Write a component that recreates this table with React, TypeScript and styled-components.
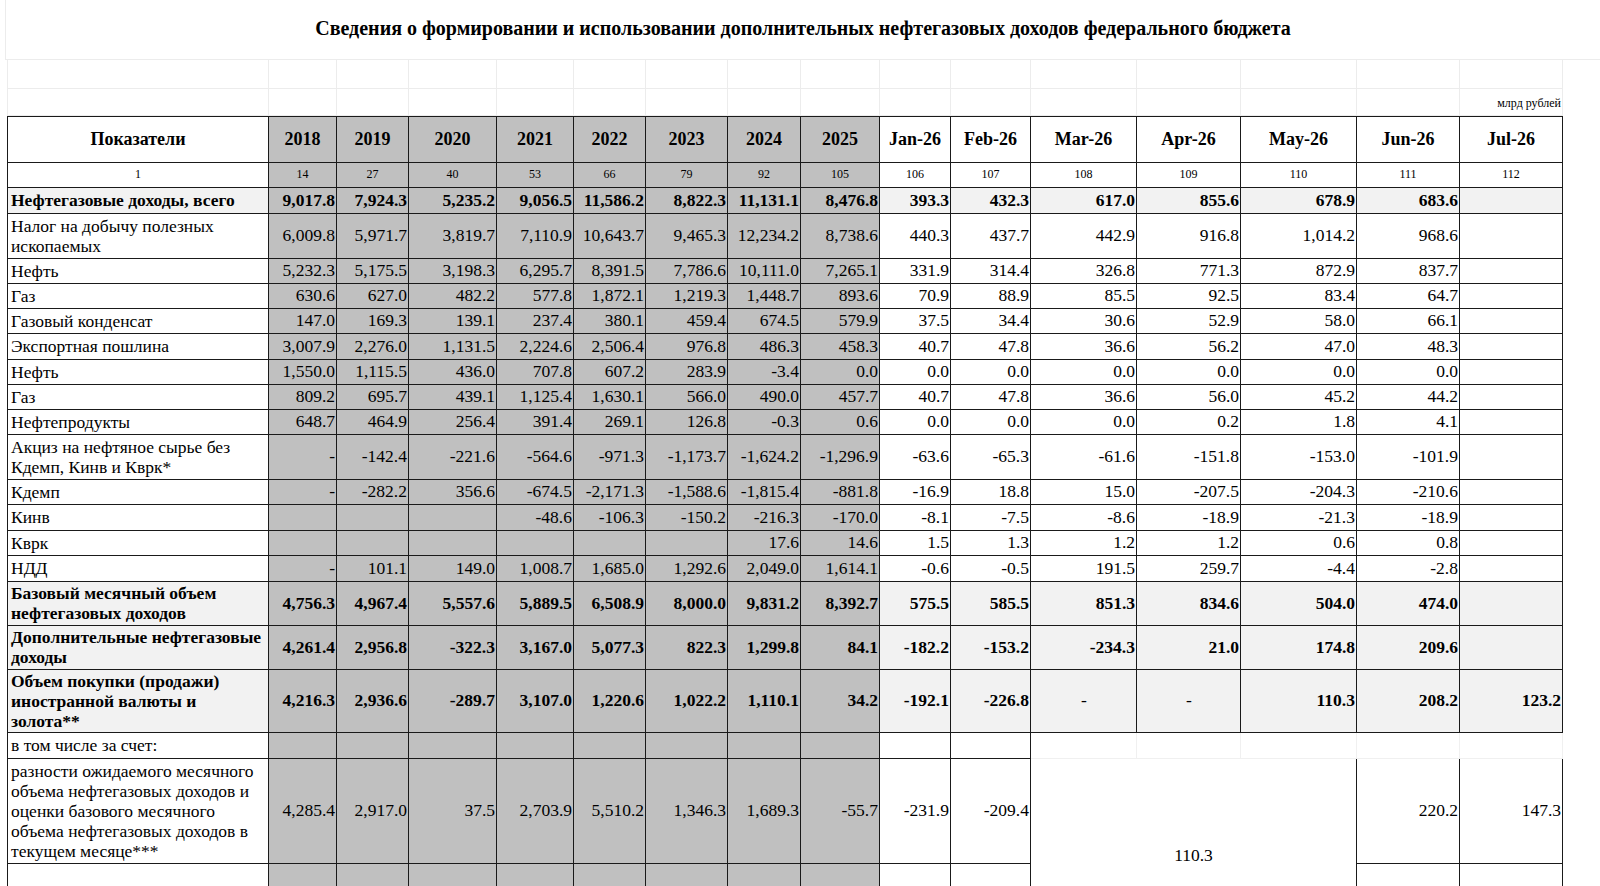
import React from 'react';
import styled, { createGlobalStyle, css } from 'styled-components';

const GlobalStyle = createGlobalStyle`
  html, body {
    margin: 0;
    background: #fff;
    color: #000;
    font-family: "Liberation Serif", "Times New Roman", serif;
  }
`;

type Tone = 'white' | 'year' | 'light';

const toneColor = (t?: Tone) => (t === 'year' ? '#c0c0c0' : t === 'light' ? '#f2f2f2' : '#fff');

const COLS = [261, 68, 72, 88, 77, 72, 82, 73, 79, 71, 80, 106, 104, 116, 103, 103];
const YEARS = ['2018', '2019', '2020', '2021', '2022', '2023', '2024', '2025'];
const MONTHS = ['Jan-26', 'Feb-26', 'Mar-26', 'Apr-26', 'May-26', 'Jun-26', 'Jul-26'];
const INDEX = ['14', '27', '40', '53', '66', '79', '92', '105', '106', '107', '108', '109', '110', '111', '112'];

const Page = styled.div`
  width: 1600px;
`;

const Title = styled.div`
  margin-left: 5px;
  height: 60px;
  line-height: 56px;
  text-align: center;
  font-size: 20px;
  font-weight: 700;
  border-left: 1px solid #ececec;
  border-bottom: 1px solid #ececec;
  box-sizing: border-box;
`;

const Grid = styled.table`
  margin-left: 7px;
  border-collapse: collapse;
  table-layout: fixed;
  width: 1555px;
`;

const SpacerRow = styled.tr<{ $h: number }>`
  height: ${(p) => p.$h}px;
`;

const SpacerCell = styled.td`
  border: 1px solid #ececec;
  border-top: none;
  padding: 0 1px 5px;
  font-size: 12px;
  text-align: right;
  vertical-align: bottom;
  line-height: 14px;
  white-space: nowrap;
`;

const Row = styled.tr<{ $h: number }>`
  height: ${(p) => p.$h}px;
`;

const cellBase = css`
  border: 1px solid #1a1a1a;
  padding: 0 2px;
  overflow: hidden;
  box-sizing: border-box;
`;

const HeadCell = styled.th<{ $tone?: Tone }>`
  ${cellBase};
  background: ${(p) => toneColor(p.$tone)};
  font-size: 18px;
  font-weight: 700;
  text-align: center;
  vertical-align: middle;
`;

const IndexCell = styled.td<{ $tone?: Tone }>`
  ${cellBase};
  background: ${(p) => toneColor(p.$tone)};
  font-size: 12px;
  text-align: center;
  vertical-align: middle;
`;

const LabelCell = styled.td<{ $tone?: Tone; $bold?: boolean }>`
  ${cellBase};
  padding-left: 3px;
  background: ${(p) => toneColor(p.$tone)};
  font-size: 17.5px;
  line-height: 20px;
  font-weight: ${(p) => (p.$bold ? 700 : 400)};
  text-align: left;
  vertical-align: middle;
`;

const NumCell = styled.td<{ $tone?: Tone; $bold?: boolean; $center?: boolean }>`
  ${cellBase};
  background: ${(p) => toneColor(p.$tone)};
  font-size: 17.5px;
  font-weight: ${(p) => (p.$bold ? 700 : 400)};
  text-align: ${(p) => (p.$center ? 'center' : 'right')};
  vertical-align: middle;
  padding-right: 1px;
  white-space: nowrap;
`;

const BlankCell = styled.td`
  ${cellBase};
  border-color: #f0f0f0;
  background: #fff;
`;

const SideCell = styled(NumCell)`
  border-top-color: #f0f0f0;
`;

const MergedCell = styled.td`
  ${cellBase};
  border-top-color: #f0f0f0;
  border-bottom-color: #fff;
  background: #fff;
  font-size: 17.5px;
  text-align: center;
  vertical-align: middle;
`;

type DataRow = {
  label: string;
  bold?: boolean;
  h: number;
  values: string[];
};

const ROWS: DataRow[] = [
  {
    label: 'Нефтегазовые доходы, всего',
    bold: true,
    h: 26,
    values: ['9,017.8', '7,924.3', '5,235.2', '9,056.5', '11,586.2', '8,822.3', '11,131.1', '8,476.8', '393.3', '432.3', '617.0', '855.6', '678.9', '683.6', ''],
  },
  {
    label: 'Налог на добычу полезных ископаемых',
    h: 45,
    values: ['6,009.8', '5,971.7', '3,819.7', '7,110.9', '10,643.7', '9,465.3', '12,234.2', '8,738.6', '440.3', '437.7', '442.9', '916.8', '1,014.2', '968.6', ''],
  },
  {
    label: 'Нефть',
    h: 25,
    values: ['5,232.3', '5,175.5', '3,198.3', '6,295.7', '8,391.5', '7,786.6', '10,111.0', '7,265.1', '331.9', '314.4', '326.8', '771.3', '872.9', '837.7', ''],
  },
  {
    label: 'Газ',
    h: 25,
    values: ['630.6', '627.0', '482.2', '577.8', '1,872.1', '1,219.3', '1,448.7', '893.6', '70.9', '88.9', '85.5', '92.5', '83.4', '64.7', ''],
  },
  {
    label: 'Газовый конденсат',
    h: 25,
    values: ['147.0', '169.3', '139.1', '237.4', '380.1', '459.4', '674.5', '579.9', '37.5', '34.4', '30.6', '52.9', '58.0', '66.1', ''],
  },
  {
    label: 'Экспортная пошлина',
    h: 26,
    values: ['3,007.9', '2,276.0', '1,131.5', '2,224.6', '2,506.4', '976.8', '486.3', '458.3', '40.7', '47.8', '36.6', '56.2', '47.0', '48.3', ''],
  },
  {
    label: 'Нефть',
    h: 25,
    values: ['1,550.0', '1,115.5', '436.0', '707.8', '607.2', '283.9', '-3.4', '0.0', '0.0', '0.0', '0.0', '0.0', '0.0', '0.0', ''],
  },
  {
    label: 'Газ',
    h: 25,
    values: ['809.2', '695.7', '439.1', '1,125.4', '1,630.1', '566.0', '490.0', '457.7', '40.7', '47.8', '36.6', '56.0', '45.2', '44.2', ''],
  },
  {
    label: 'Нефтепродукты',
    h: 25,
    values: ['648.7', '464.9', '256.4', '391.4', '269.1', '126.8', '-0.3', '0.6', '0.0', '0.0', '0.0', '0.2', '1.8', '4.1', ''],
  },
  {
    label: 'Акциз на нефтяное сырье без Кдемп, Кинв и Кврк*',
    h: 45,
    values: ['-', '-142.4', '-221.6', '-564.6', '-971.3', '-1,173.7', '-1,624.2', '-1,296.9', '-63.6', '-65.3', '-61.6', '-151.8', '-153.0', '-101.9', ''],
  },
  {
    label: 'Кдемп',
    h: 25,
    values: ['-', '-282.2', '356.6', '-674.5', '-2,171.3', '-1,588.6', '-1,815.4', '-881.8', '-16.9', '18.8', '15.0', '-207.5', '-204.3', '-210.6', ''],
  },
  {
    label: 'Кинв',
    h: 26,
    values: ['', '', '', '-48.6', '-106.3', '-150.2', '-216.3', '-170.0', '-8.1', '-7.5', '-8.6', '-18.9', '-21.3', '-18.9', ''],
  },
  {
    label: 'Кврк',
    h: 25,
    values: ['', '', '', '', '', '', '17.6', '14.6', '1.5', '1.3', '1.2', '1.2', '0.6', '0.8', ''],
  },
  {
    label: 'НДД',
    h: 26,
    values: ['-', '101.1', '149.0', '1,008.7', '1,685.0', '1,292.6', '2,049.0', '1,614.1', '-0.6', '-0.5', '191.5', '259.7', '-4.4', '-2.8', ''],
  },
  {
    label: 'Базовый месячный объем нефтегазовых доходов',
    bold: true,
    h: 44,
    values: ['4,756.3', '4,967.4', '5,557.6', '5,889.5', '6,508.9', '8,000.0', '9,831.2', '8,392.7', '575.5', '585.5', '851.3', '834.6', '504.0', '474.0', ''],
  },
  {
    label: 'Дополнительные нефтегазовые доходы',
    bold: true,
    h: 44,
    values: ['4,261.4', '2,956.8', '-322.3', '3,167.0', '5,077.3', '822.3', '1,299.8', '84.1', '-182.2', '-153.2', '-234.3', '21.0', '174.8', '209.6', ''],
  },
  {
    label: 'Объем покупки (продажи) иностранной валюты и золота**',
    bold: true,
    h: 63,
    values: ['4,216.3', '2,936.6', '-289.7', '3,107.0', '1,220.6', '1,022.2', '1,110.1', '34.2', '-192.1', '-226.8', '-', '-', '110.3', '208.2', '123.2'],
  },
];

const DIFF = ['4,285.4', '2,917.0', '37.5', '2,703.9', '5,510.2', '1,346.3', '1,689.3', '-55.7', '-231.9', '-209.4'];

const Cols = () => (
  <colgroup>
    {COLS.map((w, i) => (
      <col key={i} style={{ width: w }} />
    ))}
  </colgroup>
);

const DataLine = ({ row }: { row: DataRow }) => (
  <Row $h={row.h}>
    <LabelCell $bold={row.bold} $tone={row.bold ? 'light' : 'white'}>
      {row.label}
    </LabelCell>
    {row.values.map((v, i) => {
      const isYear = i < 8;
      const dash = !isYear && v === '-';
      return (
        <NumCell
          key={i}
          $tone={isYear ? 'year' : row.bold ? 'light' : 'white'}
          $bold={row.bold && !dash}
          $center={dash}
        >
          {v}
        </NumCell>
      );
    })}
  </Row>
);

export default function App() {
  return (
    <Page>
      <GlobalStyle />
      <Title>Сведения о формировании и использовании дополнительных нефтегазовых доходов федерального бюджета</Title>
      <Grid>
        <Cols />
        <tbody>
          <SpacerRow $h={28}>
            {COLS.map((_, i) => (
              <SpacerCell key={i} />
            ))}
          </SpacerRow>
          <SpacerRow $h={27}>
            {COLS.map((_, i) => (
              <SpacerCell key={i}>{i === COLS.length - 1 ? 'млрд рублей' : ''}</SpacerCell>
            ))}
          </SpacerRow>
        </tbody>
      </Grid>
      <Grid>
        <Cols />
        <tbody>
          <Row $h={46}>
            <HeadCell>Показатели</HeadCell>
            {YEARS.map((y) => (
              <HeadCell key={y} $tone="year">
                {y}
              </HeadCell>
            ))}
            {MONTHS.map((m) => (
              <HeadCell key={m}>{m}</HeadCell>
            ))}
          </Row>
          <Row $h={25}>
            <IndexCell>1</IndexCell>
            {INDEX.map((n, i) => (
              <IndexCell key={n} $tone={i < 8 ? 'year' : 'white'}>
                {n}
              </IndexCell>
            ))}
          </Row>
          {ROWS.map((r, i) => (
            <DataLine key={i} row={r} />
          ))}
          <Row $h={26}>
            <LabelCell>в том числе за счет:</LabelCell>
            {YEARS.map((y) => (
              <NumCell key={y} $tone="year" />
            ))}
            <NumCell />
            <NumCell />
            {[0, 1, 2, 3, 4].map((i) => (
              <BlankCell key={i} />
            ))}
          </Row>
          <Row $h={105}>
            <LabelCell>
              разности ожидаемого месячного объема нефтегазовых доходов и оценки базового месячного объема
              нефтегазовых доходов в текущем месяце***
            </LabelCell>
            {DIFF.map((v, i) => (
              <NumCell key={i} $tone={i < 8 ? 'year' : 'white'}>
                {v}
              </NumCell>
            ))}
            <MergedCell colSpan={3} rowSpan={2}>
              110.3
            </MergedCell>
            <SideCell>220.2</SideCell>
            <SideCell>147.3</SideCell>
          </Row>
          <Row $h={90}>
            <LabelCell />
            {YEARS.map((y) => (
              <NumCell key={y} $tone="year" />
            ))}
            <NumCell />
            <NumCell />
            <NumCell />
            <NumCell />
          </Row>
        </tbody>
      </Grid>
    </Page>
  );
}
